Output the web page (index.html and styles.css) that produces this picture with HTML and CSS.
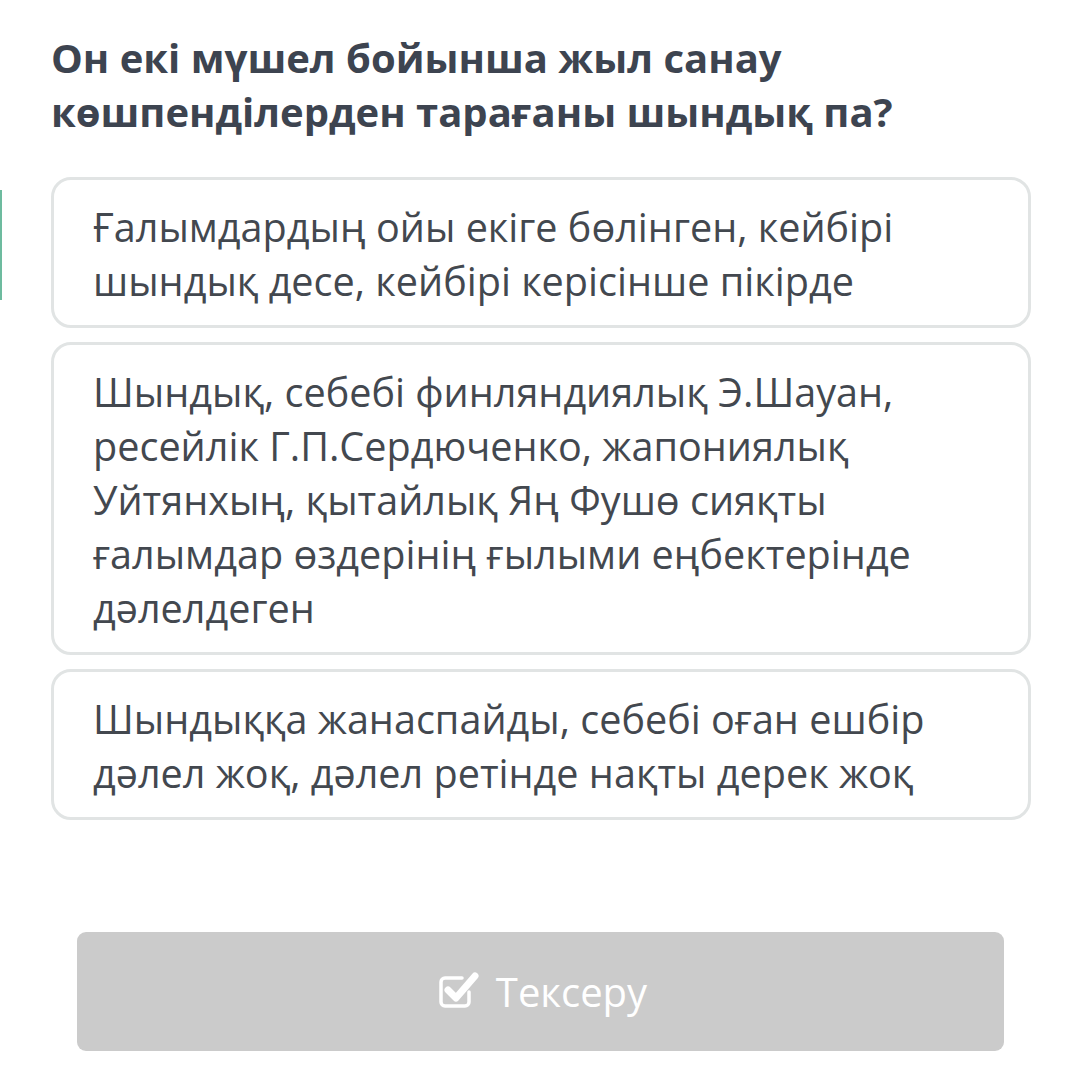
FILE: index.html
```
<!DOCTYPE html>
<html lang="kk">
<head>
<meta charset="utf-8">
<link rel="stylesheet" href="styles.css">
</head>
<body>
<div class="side-mark"></div>
<main class="quiz">
  <h1 class="question">Он екі мүшел бойынша жыл санау көшпенділерден тарағаны шындық па?</h1>
  <div class="options">
    <div class="option">Ғалымдардың ойы екіге бөлінген, кейбірі шындық десе, кейбірі керісінше пікірде</div>
    <div class="option">Шындық, себебі финляндиялық Э.Шауан, ресейлік Г.П.Сердюченко, жапониялық Уйтянхың, қытайлық Яң Фушө сияқты ғалымдар өздерінің ғылыми еңбектерінде дәлелдеген</div>
    <div class="option">Шындыққа жанаспайды, себебі оған ешбір дәлел жоқ, дәлел ретінде нақты дерек жоқ</div>
  </div>
  <div class="actions">
    <button class="check-btn">
      <svg class="check-icon" width="42" height="38" viewBox="0 0 42 38">
        <path d="M31 21 V31 a4 4 0 0 1 -4 4 H7 a4 4 0 0 1 -4 -4 V11 a4 4 0 0 1 4 -4 H24" fill="none" stroke="#fff" stroke-width="3.5" stroke-linecap="round"/>
        <path d="M10 19 L18 27 L37 5" fill="none" stroke="#fff" stroke-width="7" stroke-linecap="round" stroke-linejoin="round"/>
      </svg>
      <span>Тексеру</span>
    </button>
  </div>
</main>
</body>
</html>
```
FILE: styles.css
```
html, body {
  margin: 0;
  padding: 0;
  background: #fff;
}
body {
  font-family: "Open Sans", "Noto Sans", sans-serif;
  color: #3f4550;
  width: 1080px;
  height: 1081px;
  overflow: hidden;
  position: relative;
}
.side-mark {
  position: absolute;
  left: 0;
  top: 190px;
  width: 2px;
  height: 110px;
  background: #6dbb9f;
}
.quiz {
  padding: 31px 49px 0 51px;
}
.question {
  margin: 0;
  font-size: 40px;
  font-weight: 700;
  line-height: 54px;
  color: #3d4450;
}
.options {
  margin-top: 38px;
  display: flex;
  flex-direction: column;
  gap: 14px;
}
.option {
  border: 3px solid #e1e4e4;
  border-radius: 20px;
  padding: 20px 40px 17px 39px;
  font-size: 39.6px;
  line-height: 54px;
  color: #43484f;
}
.actions {
  margin-top: 112px;
  padding: 0 27px 0 26px;
}
.check-btn {
  width: 100%;
  height: 119px;
  border: none;
  border-radius: 9px;
  background: #cbcbcb;
  color: #fff;
  font-family: "Open Sans", "Noto Sans", sans-serif;
  font-size: 40px;
  display: flex;
  align-items: center;
  justify-content: center;
  gap: 16px;
  padding: 0 0 0 4px;
}
.check-icon {
  display: block;
  margin-top: -4px;
}
```
